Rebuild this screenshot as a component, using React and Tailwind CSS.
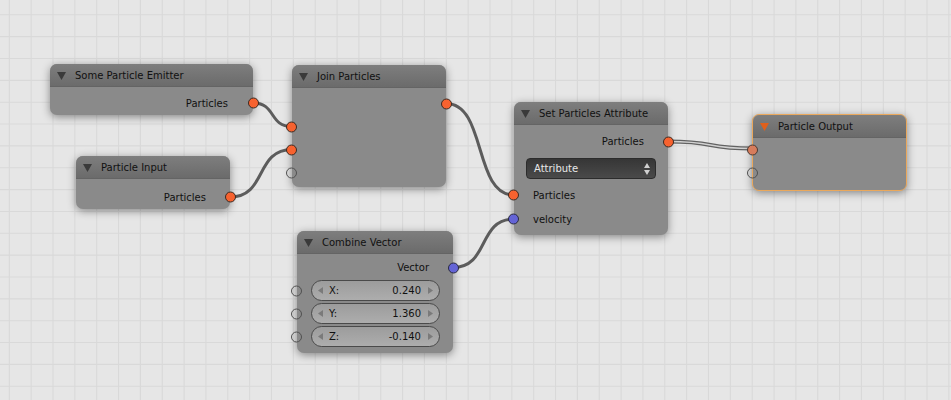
import React from 'react'

const font = { fontFamily: '"DejaVu Sans", "Liberation Sans", sans-serif' }

function Tri({ color = '#3a3a3a' }) {
  return (
    <svg width="9" height="8" viewBox="0 0 9 8" className="shrink-0">
      <polygon points="0,0 9,0 4.5,8" fill={color} />
    </svg>
  )
}

function Header({ title, tri }) {
  return (
    <div className="h-[23px] rounded-t-[7px] bg-linear-to-b from-[#7e7e7e] to-[#6b6b6b] border-b border-[#646464] flex items-center pl-[7px] pt-[2px]">
      <Tri color={tri} />
      <span className="ml-[9px] text-[10px] text-[#111] leading-none">{title}</span>
    </div>
  )
}

function Socket({ side, kind = 'orange' }) {
  const pos = side === 'left' ? 'left-[-6px]' : 'right-[-6px]'
  const fill = {
    orange: 'bg-[#f7622f] border-[#3a2a22]',
    blue: 'bg-[#6464d6] border-[#2a2a40]',
    empty: 'bg-transparent border-[#505050]',
    dim: 'bg-[#d67c5c] border-[#4a3a32]',
  }[kind]
  return <span className={`absolute ${pos} top-1/2 -translate-y-1/2 w-[11px] h-[11px] rounded-full border ${fill}`} />
}

function Node({ className, children, selected }) {
  return (
    <div
      className={`absolute rounded-[7px] bg-[#8a8a8a] shadow-[0_2px_8px_rgba(0,0,0,0.42)] ${selected ? 'border border-[#eaa85c]' : ''} ${className}`}
    >
      {children}
    </div>
  )
}

function Arrow({ dir }) {
  return (
    <svg width="5" height="7" viewBox="0 0 5 7" className="shrink-0">
      <polygon points={dir === 'l' ? '5,0 5,7 0,3.5' : '0,0 0,7 5,3.5'} fill="#7a7a7a" />
    </svg>
  )
}

function NumField({ label, value }) {
  return (
    <div className="relative h-[23px] flex items-center">
      <Socket side="left" kind="empty" />
      <div className="ml-[14px] mr-[13px] flex-1 h-[21px] rounded-full border border-[#4a4a4a] bg-linear-to-b from-[#9c9c9c] to-[#adadad] flex items-center px-[6px] text-[10px] text-[#111]">
        <Arrow dir="l" />
        <span className="ml-[6px]">{label}</span>
        <span className="ml-auto mr-[7px]">{value}</span>
        <Arrow dir="r" />
      </div>
    </div>
  )
}

function link(x1, y1, x2, y2) {
  const h = Math.max(Math.abs(x2 - x1) * 0.6, 20)
  return `M${x1} ${y1} C${x1 + h} ${y1}, ${x2 - h} ${y2}, ${x2} ${y2}`
}

const links = [
  [253, 103, 292, 126.5],
  [230, 197, 292, 149.5],
  [446, 103.5, 514, 195],
  [453, 267.5, 514, 219],
]

export default function App() {
  const step = 21.85
  const vx = Array.from({ length: 45 }, (_, i) => 9.3 + i * step)
  const hy = Array.from({ length: 19 }, (_, i) => 14.8 + i * step)

  return (
    <div className="relative w-[951px] h-[400px] overflow-hidden bg-[#e6e6e6]" style={font}>
      {/* grid + links */}
      <svg className="absolute inset-0" width="951" height="400">
        {vx.map((x, i) => <line key={'v' + i} x1={x} y1="0" x2={x} y2="400" stroke="#d9d9d9" strokeWidth="1.1" />)}
        {hy.map((y, i) => <line key={'h' + i} x1="0" y1={y} x2="951" y2={y} stroke="#d9d9d9" strokeWidth="1.1" />)}
        {links.map((l, i) => (
          <path key={i} d={link(...l)} fill="none" stroke="#5c5c5c" strokeWidth="3" />
        ))}
        <path d={link(668, 141.5, 753, 148.5)} fill="none" stroke="#626262" strokeWidth="4" />
        <path d={link(668, 141.5, 753, 148.5)} fill="none" stroke="#d2d2d2" strokeWidth="1.3" />
      </svg>

      {/* Some Particle Emitter */}
      <Node className="left-[50px] top-[64px] w-[203px]">
        <Header title="Some Particle Emitter" />
        <div className="pt-[5px] pb-[1px]">
          <div className="relative h-[22px] flex items-center justify-end pr-[25px] text-[10px] text-[#111]">
            Particles
            <Socket side="right" />
          </div>
        </div>
      </Node>

      {/* Particle Input */}
      <Node className="left-[76px] top-[156px] w-[154px]">
        <Header title="Particle Input" />
        <div className="pt-[7px] pb-[1px]">
          <div className="relative h-[22px] flex items-center justify-end pr-[24px] text-[10px] text-[#111]">
            Particles
            <Socket side="right" />
          </div>
        </div>
      </Node>

      {/* Join Particles */}
      <Node className="left-[292px] top-[65px] w-[154px]">
        <Header title="Join Particles" />
        <div className="pt-[4px] pb-[3px]">
          <div className="relative h-[23px]"><Socket side="right" /></div>
          <div className="relative h-[23px]"><Socket side="left" /></div>
          <div className="relative h-[23px]"><Socket side="left" /></div>
          <div className="relative h-[23px]"><Socket side="left" kind="empty" /></div>
        </div>
      </Node>

      {/* Set Particles Attribute */}
      <Node className="left-[514px] top-[102px] w-[154px]">
        <Header title="Set Particles Attribute" />
        <div className="pt-[5px] pb-[4px] text-[10px] text-[#111]">
          <div className="relative h-[23px] flex items-center justify-end pr-[24px]">
            Particles
            <Socket side="right" />
          </div>
          <div className="mt-[5px] mx-[12px] h-[21px] rounded-[4px] border border-[#2c2c2c] bg-linear-to-b from-[#363636] to-[#4a4a4a] flex items-center pl-[7px] pr-[5px] text-[#e8e8e8]">
            Attribute
            <svg width="6" height="12" viewBox="0 0 6 12" className="ml-auto">
              <polygon points="0,5 6,5 3,0" fill="#d0d0d0" />
              <polygon points="0,7 6,7 3,12" fill="#d0d0d0" />
            </svg>
          </div>
          <div className="mt-[4px] relative h-[24px] flex items-center pl-[19px]">
            Particles
            <Socket side="left" />
          </div>
          <div className="relative h-[24px] flex items-center pl-[19px]">
            velocity
            <Socket side="left" kind="blue" />
          </div>
        </div>
      </Node>

      {/* Particle Output */}
      <Node selected className="left-[752px] top-[114px] w-[155px]">
        <Header title="Particle Output" tri="#e0601c" />
        <div className="pb-[6px]">
          <div className="relative h-[23px]"><Socket side="left" kind="dim" /></div>
          <div className="relative h-[23px]"><Socket side="left" kind="empty" /></div>
        </div>
      </Node>

      {/* Combine Vector */}
      <Node className="left-[297px] top-[231px] w-[156px]">
        <Header title="Combine Vector" />
        <div className="pt-[2px] pb-[5px] text-[10px] text-[#111]">
          <div className="relative h-[23px] flex items-center justify-end pr-[24px]">
            Vector
            <Socket side="right" kind="blue" />
          </div>
          <NumField label="X:" value="0.240" />
          <NumField label="Y:" value="1.360" />
          <NumField label="Z:" value="-0.140" />
        </div>
      </Node>
    </div>
  )
}
